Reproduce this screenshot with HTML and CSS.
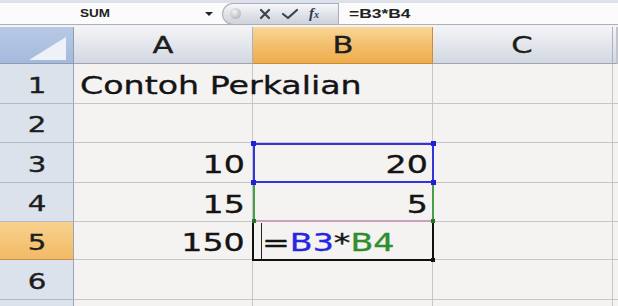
FILE: index.html
```html
<!DOCTYPE html>
<html lang="en">
<head>
  <meta charset="UTF-8">
  <title>Contoh Perkalian</title>
  <link rel="stylesheet" href="styles.css">
</head>
<body>

  <div class="formula-bar">
    <div class="name-box">
      <span class="wide bar-text">SUM</span>
      <span class="drop-arrow"></span>
    </div>
    <div class="controls">
      <span class="knob"></span>
      <svg class="ctl-icon" width="14" height="12" viewBox="0 0 14 12">
        <path d="M3 2 L11 10 M11 2 L3 10" stroke="#3c4350" stroke-width="2.2" stroke-linecap="round"/>
      </svg>
      <svg class="ctl-icon" width="18" height="12" viewBox="0 0 18 12">
        <path d="M2 6 L7 10 L16 2" fill="none" stroke="#3c4350" stroke-width="2.2" stroke-linecap="round" stroke-linejoin="round"/>
      </svg>
      <span class="fx"><i>f</i><small>x</small></span>
    </div>
    <div class="formula-input">
      <span class="wide bar-text formula-text">=B3*B4</span>
    </div>
  </div>

  <div class="sheet">
    <div class="corner">
      <svg width="73" height="37" viewBox="0 0 73 37">
        <polygon points="66,10 66,33 29,33" fill="#eef1f7"/>
      </svg>
    </div>
    <div class="col-head"><span class="wide mid">A</span></div>
    <div class="col-head active-head"><span class="wide mid">B</span></div>
    <div class="col-head"><span class="wide mid">C</span></div>
    <div class="col-head edge"></div>

    <div class="row-head"><span class="wide mid">1</span></div>
    <div class="cell"><span class="wide left">Contoh Perkalian</span></div>
    <div class="cell"></div>
    <div class="cell"></div>
    <div class="cell edge"></div>

    <div class="row-head"><span class="wide mid">2</span></div>
    <div class="cell"></div>
    <div class="cell"></div>
    <div class="cell"></div>
    <div class="cell edge"></div>

    <div class="row-head"><span class="wide mid">3</span></div>
    <div class="cell num"><span class="wide right">10</span></div>
    <div class="cell num num-b"><span class="wide right">20</span></div>
    <div class="cell"></div>
    <div class="cell edge"></div>

    <div class="row-head"><span class="wide mid">4</span></div>
    <div class="cell num"><span class="wide right">15</span></div>
    <div class="cell num num-b"><span class="wide right">5</span></div>
    <div class="cell"></div>
    <div class="cell edge"></div>

    <div class="row-head active-row"><span class="wide mid">5</span></div>
    <div class="cell num"><span class="wide right">150</span></div>
    <div class="cell editing"><span class="wide left">=<b class="ref-blue">B3</b>*<b class="ref-green">B4</b></span></div>
    <div class="cell"></div>
    <div class="cell edge"></div>

    <div class="row-head"><span class="wide mid">6</span></div>
    <div class="cell"></div>
    <div class="cell"></div>
    <div class="cell"></div>
    <div class="cell edge"></div>

    <div class="row-head"></div>
    <div class="cell"></div>
    <div class="cell"></div>
    <div class="cell"></div>
    <div class="cell edge"></div>

    <!-- range highlights drawn over the grid -->
    <div class="range range-blue"></div>
    <div class="range range-green"></div>
    <div class="active-box"></div>
    <span class="cursor"></span>
    <span class="handle blue h1"></span>
    <span class="handle blue h2"></span>
    <span class="handle blue h3"></span>
    <span class="handle blue h4"></span>
    <span class="handle green h5"></span>
    <span class="handle green h6"></span>
    <span class="handle black h7"></span>
  </div>

</body>
</html>
```

FILE: styles.css
```css
body {
  margin: 0;
  width: 618px;
  height: 306px;
  overflow: hidden;
  background: #f4f3f1;
  font-family: "DejaVu Sans", sans-serif;
}
.wide {
  display: inline-block;
  transform: scaleX(1.33);
  white-space: nowrap;
  -webkit-text-stroke: 0.35px currentColor;
}
.wide.left { transform-origin: left center; }
.wide.right { transform-origin: right center; }
.wide.mid { transform-origin: center center; }

/* formula bar */
.formula-bar {
  height: 21px;
  border-top: 3px solid #dde2ea;
  border-bottom: 1px solid #a9b1bd;
  background: #fbfbfb;
  display: flex;
  align-items: center;
  margin-bottom: 2px;
}
.name-box {
  width: 222px;
  display: flex;
  align-items: center;
  position: relative;
  height: 100%;
}
.bar-text {
  font-family: "Liberation Sans", Arial, sans-serif;
  font-weight: bold;
  font-size: 10px;
  color: #222;
  transform-origin: left center;
  transform: scaleX(1.35);
  -webkit-text-stroke: 0;
}
.name-box .bar-text {
  margin-left: 80px;
}
.drop-arrow {
  margin-left: auto;
  margin-right: 9px;
  width: 0;
  height: 0;
  border-left: 4px solid transparent;
  border-right: 4px solid transparent;
  border-top: 4px solid #222;
}
.controls {
  width: 115px;
  height: 20px;
  border-radius: 11px 0 0 11px;
  border: 1px solid #a7afbc;
  border-right: none;
  background: linear-gradient(#f6f7f9, #dcdfe5 60%, #cfd3da);
  display: flex;
  align-items: center;
}
.knob {
  width: 11px;
  height: 11px;
  border-radius: 50%;
  margin-left: 7px;
  background: radial-gradient(circle at 40% 35%, #f4f4f4, #b8bcc3 70%);
}
.ctl-icon {
  margin-left: 17px;
}
.ctl-icon + .ctl-icon {
  margin-left: 9px;
}
.fx {
  margin-left: 10px;
  font-family: "Liberation Serif", serif;
  font-size: 15px;
  color: #2b3a55;
  font-weight: bold;
}
.fx small {
  font-size: 10px;
  font-style: italic;
}
.formula-input {
  flex: 1;
  height: 100%;
  border-left: 1px solid #a7afbc;
  display: flex;
  align-items: center;
}
.formula-text {
  margin-left: 10px;
  font-size: 12px;
  transform: scaleX(1.45);
}

/* grid */
.sheet {
  position: relative;
  display: grid;
  grid-template-columns: 74px 179px 180px 180px 5px;
  grid-template-rows: 37px 40px 39px 40px 39px 38px 40px 10px;
}
.corner {
  background: linear-gradient(#b8c9e6, #a4badd);
  border-right: 1px solid #8e9cb2;
  border-bottom: 1px solid #8e9cb2;
}
.corner svg {
  display: block;
}
.col-head {
  background: linear-gradient(#f3f4f7, #e3e6ec 50%, #d2d7e0);
  border-right: 1px solid #a9b2c1;
  border-bottom: 1px solid #9aa4b4;
  display: flex;
  align-items: center;
  justify-content: center;
  font-size: 23px;
  color: #1d1d1d;
}
.col-head.active-head {
  background: linear-gradient(#f9d797, #f3bf6c 50%, #eeab4c);
  border-right-color: #c78c3c;
  border-bottom-color: #c78c3c;
}
.col-head.edge,
.cell.edge {
  border-right: 2px solid #c3c5ca;
}
.row-head {
  background: #dbe2ec;
  border-right: 1px solid #9aa4b4;
  border-bottom: 1px solid #b1bac8;
  display: flex;
  align-items: center;
  justify-content: center;
  font-size: 22px;
  color: #1d1d1d;
  padding-top: 3px;
}
.row-head.active-row {
  background: linear-gradient(#f8d18e, #f2ba66);
  border-bottom-color: #c9924a;
}
.cell {
  background: #f4f3f1;
  border-right: 1px solid #c6c6c6;
  border-bottom: 1px solid #c6c6c6;
  display: flex;
  align-items: center;
  padding-left: 6px;
  padding-top: 4px;
  font-size: 25px;
  color: #141414;
  white-space: nowrap;
}
.cell.num {
  justify-content: flex-end;
  padding-right: 7px;
}
.cell.num-b {
  padding-right: 4px;
}
.cell.editing {
  padding-left: 9px;
}
.cell.editing b {
  font-weight: normal;
}
.ref-blue { color: #2727e0; }
.ref-green { color: #2f8f2f; }

.range {
  position: absolute;
  left: 253px;
  width: 181px;
  box-sizing: border-box;
}
.range-blue {
  top: 116px;
  height: 40px;
  border: 2px solid #3434d8;
}
.range-green {
  top: 155px;
  height: 40px;
  border: 2px solid #47a047;
  border-top: none;
  border-bottom-color: #c9a0c0;
}
.active-box {
  position: absolute;
  left: 252px;
  top: 194px;
  width: 182px;
  height: 40px;
  box-sizing: border-box;
  border: 2px solid #111;
  border-top: none;
}
.cursor {
  position: absolute;
  left: 261px;
  top: 196px;
  width: 1px;
  height: 36px;
  background: #222;
}
.handle {
  position: absolute;
  width: 5px;
  height: 5px;
}
.handle.blue { background: #2020d8; }
.handle.green { background: #2d6f2d; width: 4px; height: 4px; }
.handle.black { background: #111; width: 4px; height: 4px; }
.h1 { left: 251px; top: 114px; }
.h2 { left: 431px; top: 114px; }
.h3 { left: 251px; top: 153px; }
.h4 { left: 431px; top: 153px; }
.h5 { left: 252px; top: 192px; }
.h6 { left: 431px; top: 192px; }
.h7 { left: 431px; top: 231px; }
```
